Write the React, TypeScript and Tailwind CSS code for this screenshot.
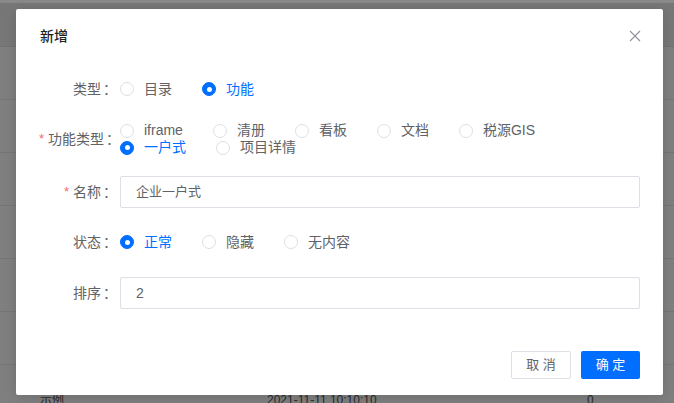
import React from "react";

type Opt = { label: string; checked?: boolean };

const Radio = ({ label, checked }: Opt) => (
  <label className="flex items-center mr-[30px] cursor-pointer">
    <span
      className={
        checked
          ? "w-[14px] h-[14px] rounded-full bg-[#006eff] border border-[#006eff] flex items-center justify-center"
          : "w-[14px] h-[14px] rounded-full bg-white border border-[#dcdfe6]"
      }
    >
      {checked && <span className="w-[5px] h-[5px] rounded-full bg-white" />}
    </span>
    <span
      className={
        checked
          ? "ml-[10px] text-[14px] text-[#006eff]"
          : "ml-[10px] text-[14px] text-[#606266]"
      }
    >
      {label}
    </span>
  </label>
);

const FormItem = ({
  label,
  required,
  className,
  children,
}: {
  label: string;
  required?: boolean;
  className?: string;
  children: React.ReactNode;
}) => (
  <div className={`flex items-center ${className ?? ""}`}>
    <div className="w-[80px] shrink-0 flex justify-end items-center text-[14px] text-[#606266] whitespace-nowrap">
      {required && <span className="text-[#f56c6c] text-[13px] mr-[4px]">*</span>}
      <span>{label}</span>
      <span className="inline-block w-[19px] pl-[2px] text-left">：</span>
    </div>
    <div className="flex-1">{children}</div>
  </div>
);

const rows = [0, 1, 2, 3, 4, 5, 6];

export default function App() {
  return (
    <div
      className="relative w-[674px] h-[403px] overflow-hidden bg-[#7f7f7f] text-[13px]"
      style={{ fontFamily: '"Liberation Sans", "Noto Sans CJK SC", sans-serif' }}
    >
      {/* page behind the mask */}
      <div className="h-[3px] bg-[#898989]" />
      <div className="h-[44px] bg-[#777777] border-b border-[#717171]" />
      {rows.map((r) => (
        <div
          key={r}
          className="h-[53px] border-b border-[#747474] flex items-center pt-[18px] text-[#2a2a2a] text-[12px]"
        >
          <span className="ml-[40px] w-[227px]">示例</span>
          <span className="w-[320px]">2021-11-11 10:10:10</span>
          <span>0</span>
        </div>
      ))}

      {/* dialog */}
      <div className="absolute left-[16px] top-[9px] w-[647px] h-[386px] bg-white rounded-[2px] shadow-[0_2px_12px_rgba(0,0,0,0.15)] flex flex-col">
        <div className="flex items-center justify-between pl-[24px] pr-[22px] pt-[15px] pb-[2px]">
          <span className="text-[14px] leading-[24px] font-medium text-[#1f1f1f]">新增</span>
          <svg width="12" height="12" viewBox="0 0 12 12">
            <path d="M1 1 L11 11 M11 1 L1 11" stroke="#909399" strokeWidth="1.1" fill="none" />
          </svg>
        </div>

        <div className="pt-[23px] pl-[24px] pr-[23px]">
          <FormItem label="类型" className="h-[32px]">
            <div className="flex items-center">
              <Radio label="目录" />
              <Radio label="功能" checked />
            </div>
          </FormItem>

          <FormItem label="功能类型" required className="h-[34px] mt-[17px]">
            <div className="flex flex-col leading-[17px]">
              <div className="flex items-center h-[17px]">
                <Radio label="iframe" />
                <Radio label="清册" />
                <Radio label="看板" />
                <Radio label="文档" />
                <Radio label="税源GIS" />
              </div>
              <div className="flex items-center h-[17px]">
                <Radio label="一户式" checked />
                <Radio label="项目详情" />
              </div>
            </div>
          </FormItem>

          <FormItem label="名称" required className="h-[32px] mt-[20px]">
            <div className="h-[32px] border border-[#dcdfe6] rounded-[2px] pl-[15px] flex items-center text-[#606266]">
              企业一户式
            </div>
          </FormItem>

          <FormItem label="状态" className="h-[32px] mt-[18px]">
            <div className="flex items-center">
              <Radio label="正常" checked />
              <Radio label="隐藏" />
              <Radio label="无内容" />
            </div>
          </FormItem>

          <FormItem label="排序" className="h-[32px] mt-[19px]">
            <div className="h-[32px] border border-[#dcdfe6] rounded-[2px] pl-[15px] flex items-center text-[14px] text-[#606266]">
              2
            </div>
          </FormItem>

          <div className="flex justify-end gap-[10px] mt-[42px]">
            <button className="w-[60px] h-[28px] border border-[#dcdfe6] rounded-[2px] bg-white text-[#606266] text-[13px]">
              取 消
            </button>
            <button className="w-[59px] h-[28px] rounded-[2px] bg-[#006eff] text-white text-[13px]">
              确 定
            </button>
          </div>
        </div>
      </div>
    </div>
  );
}
